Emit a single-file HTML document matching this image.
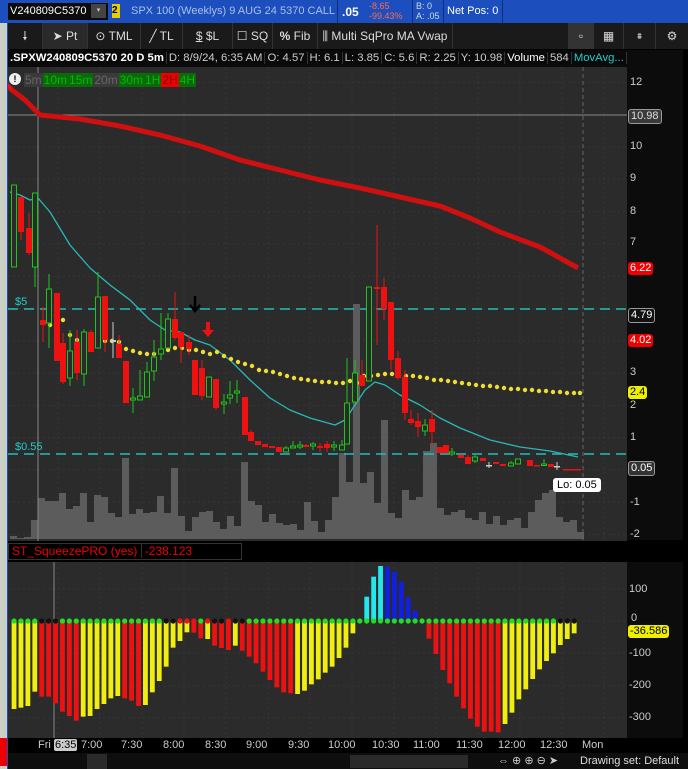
<!DOCTYPE html>
<html><head><meta charset="utf-8">
<style>
*{margin:0;padding:0;box-sizing:border-box}
body{width:688px;height:769px;overflow:hidden;background:#000;font-family:"Liberation Sans",sans-serif;position:relative}
.a{position:absolute}
.top{left:0;top:0;width:688px;height:23px;background:#1c4fbd}
.tb{left:8px;top:23px;width:680px;height:26px;background:#1a1a1a}
.btn{position:absolute;top:0;height:26px;color:#ddd;font-size:12px;line-height:26px;border-right:1px solid #333;text-align:center}
.info{left:8px;top:50px;width:620px;height:17px;background:#0a0a0a;font-size:11.3px;color:#ccc;line-height:17px;white-space:nowrap;overflow:hidden}
.info span{padding:0 2px;border-right:1px solid #333}
.lbl{position:absolute;font-size:11px;border-radius:3px;padding:0 2px;line-height:13px}
.ax{position:absolute;color:#ccc;font-size:11px}
.tf span{display:inline-block;padding:0 1px;margin-right:0}
</style></head><body>
<div class="a" style="left:0;top:0;width:8px;height:769px;background:#c9cfc2"></div>
<div class="a" style="left:7px;top:0;width:2px;height:769px;background:#1c4fbd"></div>
<div class="a top">
 <div class="a" style="left:8px;top:3px;width:100px;height:17px;background:#0b0b0b;color:#fff;font-size:11px;line-height:17px;padding-left:2px">V240809C5370</div>
 <div class="a" style="left:91px;top:4px;width:15px;height:14px;background:#444;color:#ccc;font-size:7px;text-align:center;line-height:14px">▾</div>
 <div class="a" style="left:112px;top:4px;width:8px;height:14px;background:#e8d000;color:#000;font-size:10px;font-weight:bold;line-height:14px">2</div>
 <div class="a" style="left:131px;top:5px;color:#a9bfe8;font-size:11px">SPX 100 (Weeklys) 9 AUG 24 5370 CALL</div>
 <div class="a" style="left:337px;top:0;width:1px;height:23px;background:#0d2f7a"></div>
 <div class="a" style="left:342px;top:5px;color:#fff;font-size:12px;font-weight:bold">.05</div>
 <div class="a" style="left:369px;top:1px;color:#ff6a4a;font-size:9px;line-height:10px">-8.65<br>-99.43%</div>
 <div class="a" style="left:412px;top:0;width:1px;height:23px;background:#0d2f7a"></div>
 <div class="a" style="left:416px;top:1px;color:#cdd;font-size:9px;line-height:10px">B: 0<br>A: .05</div>
 <div class="a" style="left:443px;top:0;width:1px;height:23px;background:#0d2f7a"></div>
 <div class="a" style="left:447px;top:5px;color:#fff;font-size:11px">Net Pos: 0</div>
 <div class="a" style="left:502px;top:0;width:1px;height:23px;background:#0d2f7a"></div>
</div>
<div class="a tb">
 <div class="btn" style="left:0;width:35px">🠗</div>
 <div class="btn" style="left:35px;width:45px;background:#2a2a2a">➤ Pt</div>
 <div class="btn" style="left:80px;width:53px">⊙ TML</div>
 <div class="btn" style="left:133px;width:42px">╱ TL</div>
 <div class="btn" style="left:175px;width:50px"><u>$</u> $L</div>
 <div class="btn" style="left:225px;width:40px">☐ SQ</div>
 <div class="btn" style="left:265px;width:45px"><b>%</b> Fib</div>
 <div class="btn" style="left:310px;width:135px">⫼ Multi SqPro MA Vwap</div>
 <div class="btn" style="left:560px;width:26px;background:#333;border:none">▫</div>
 <div class="btn" style="left:586px;width:30px">▦</div>
 <div class="btn" style="left:616px;width:32px;font-size:9px">⩩</div>
 <div class="btn" style="left:648px;width:32px;border:none">⚙</div>
</div>
<div class="a info"><span style="color:#fff;font-weight:bold">.SPXW240809C5370 20 D 5m</span><span>D: 8/9/24, 6:35 AM</span><span>O: 4.57</span><span>H: 6.1</span><span>L: 3.85</span><span>C: 5.6</span><span>R: 2.25</span><span>Y: 10.98</span><span style="color:#fff">Volume</span><span>584</span><span style="color:#2cc">MovAvg...</span></div>
<div class="a" style="left:627px;top:50px;width:56px;height:490px;background:#0c0c0c"></div>
<div class="a" style="left:683px;top:50px;width:5px;height:719px;background:#000"></div>
<svg class="a" style="left:8px;top:67px" width="619" height="474" id="main"></svg>
<div class="a" style="left:9px;top:73px;width:12px;height:12px;border-radius:6px;background:#eee;color:#000;font-size:9px;text-align:center;line-height:12px;font-weight:bold">!</div>
<div class="a tf" style="left:24px;top:73px;font-size:12px;line-height:14px;white-space:nowrap">
<span style="background:#3a3a3a;color:#666">5m</span><span style="background:#0a6a0a;color:#0b0">10m</span><span style="background:#0a6a0a;color:#0b0">15m</span><span style="background:#3a3a3a;color:#666">20m</span><span style="background:#0a6a0a;color:#0b0">30m</span><span style="background:#0a6a0a;color:#0b0">1H</span><span style="background:#e00;color:#700">2H</span><span style="background:#0a6a0a;color:#0b0">4H</span></div>
<div class="ax" style="left:630px;top:76px">12</div>
<div class="ax" style="left:630px;top:140px">10</div>
<div class="ax" style="left:630px;top:172px">9</div>
<div class="ax" style="left:630px;top:205px">8</div>
<div class="ax" style="left:630px;top:236px">7</div>
<div class="ax" style="left:630px;top:366px">3</div>
<div class="ax" style="left:630px;top:399px">2</div>
<div class="ax" style="left:630px;top:431px">1</div>
<div class="ax" style="left:630px;top:496px">-1</div>
<div class="ax" style="left:630px;top:528px">-2</div>
<div class="lbl" style="left:628px;top:109px;background:#3a3a3a;color:#ddd;border:1px solid #999">10.98</div>
<div class="lbl" style="left:628px;top:262px;background:#e00;color:#fff">6.22</div>
<div class="lbl" style="left:628px;top:308px;background:#111;color:#fff;border:1px solid #999">4.79</div>
<div class="lbl" style="left:628px;top:334px;background:#e00;color:#fff">4.02</div>
<div class="lbl" style="left:628px;top:386px;background:#ee0;color:#000">2.4</div>
<div class="lbl" style="left:628px;top:461px;background:#333;color:#fff;border:1px solid #999">0.05</div>
<div class="a" style="left:553px;top:478px;background:#fff;color:#000;font-size:11px;padding:1px 4px;border-radius:3px">Lo: 0.05</div>
<div class="a" style="left:15px;top:296px;color:#2cc;font-size:11px">$5</div>
<div class="a" style="left:15px;top:441px;color:#2cc;font-size:11px">$0.55</div>
<div class="a" style="left:8px;top:541px;width:619px;height:21px;background:#000"></div>
<div class="a" style="left:8px;top:543px;width:234px;height:17px;border:1px solid #333;color:#e00;font-size:12px;line-height:15px;padding-left:3px">ST_SqueezePRO (yes) <span style="border-left:1px solid #333;padding-left:3px">-238.123</span></div>
<svg class="a" style="left:8px;top:562px" width="619" height="176" id="hist"></svg>
<div class="a" style="left:627px;top:562px;width:56px;height:176px;background:#0c0c0c"></div>
<div class="ax" style="left:629px;top:583px">100</div>
<div class="ax" style="left:631px;top:612px">0</div>
<div class="ax" style="left:629px;top:647px">-100</div>
<div class="ax" style="left:629px;top:679px">-200</div>
<div class="ax" style="left:629px;top:711px">-300</div>
<div class="lbl" style="left:628px;top:625px;background:#ee0;color:#000">-36.586</div>
<div class="a" style="left:8px;top:738px;width:675px;height:15px;background:#000"></div>
<div class="a" style="left:8px;top:739px;font-size:11px;color:#ccc;width:680px;height:14px">
<span class="a" style="left:30px">Fri</span><span class="a" style="left:46px;background:#ccc;color:#000;border-radius:2px;padding:0 1px">6:35</span><span class="a" style="left:73px">7:00</span><span class="a" style="left:113px">7:30</span><span class="a" style="left:155px">8:00</span><span class="a" style="left:197px">8:30</span><span class="a" style="left:238px">9:00</span><span class="a" style="left:280px">9:30</span><span class="a" style="left:320px">10:00</span><span class="a" style="left:364px">10:30</span><span class="a" style="left:405px">11:00</span><span class="a" style="left:448px">11:30</span><span class="a" style="left:490px">12:00</span><span class="a" style="left:532px">12:30</span><span class="a" style="left:574px">Mon</span></div>
<div class="a" style="left:8px;top:753px;width:680px;height:16px;background:#0e0e0e"></div>
<div class="a" style="left:87px;top:754px;width:20px;height:15px;background:#2a2a2a"></div>
<div class="a" style="left:350px;top:755px;width:118px;height:13px;background:#2a2a2a"></div>
<div class="a" style="left:498px;top:754px;color:#ccc;font-size:11px">⇔ ⊕ ⊕ ⊖ ➤</div>
<div class="a" style="left:580px;top:755px;color:#ddd;font-size:11px">Drawing set: Default</div>
<div class="a" style="left:0;top:738px;width:7px;height:28px;background:#e00"></div>
<script>
var NS="http://www.w3.org/2000/svg";
function el(p,t,a){var e=document.createElementNS(NS,t);for(var k in a)e.setAttribute(k,a[k]);p.appendChild(e);return e;}
var m=document.getElementById('main'),OX=8,OY=67;
el(m,'rect',{x:0,y:0,width:619,height:474,fill:'#2b2b2b'});
for(var gx=50;gx<619;gx+=42)el(m,'line',{x1:gx,y1:0,x2:gx,y2:474,stroke:'#363636','stroke-dasharray':'2,3'});
for(var p=-2;p<=12;p++){var yy=470-32.3*p-OY;el(m,'line',{x1:0,y1:yy,x2:619,y2:yy,stroke:'#363636','stroke-dasharray':'2,3'});}
var vols=[[10,536],[17,538],[24,537],[31,520],[38,498],[45,501],[52,501],[59,493],[66,509],[73,506],[80,493],[87,522],[94,495],[101,497],[108,513],[115,517],[122,458],[129,514],[136,509],[143,513],[150,512],[157,496],[164,513],[171,468],[178,516],[185,531],[192,517],[199,512],[206,511],[213,522],[220,529],[227,516],[234,526],[241,462],[248,501],[255,505],[262,522],[269,514],[276,523],[283,525],[290,524],[297,530],[304,502],[311,521],[318,532],[325,520],[332,497],[339,453],[346,482],[353,304],[360,483],[367,472],[374,503],[381,420],[388,513],[395,518],[402,490],[409,500],[416,497],[423,451],[430,443],[437,508],[444,515],[451,512],[458,510],[465,518],[472,520],[479,512],[486,524],[493,516],[500,525],[507,520],[514,518],[521,528],[528,512],[535,500],[542,493],[549,490],[556,517],[563,522],[570,520],[577,532]];
vols.forEach(function(v){el(m,'rect',{x:v[0]-OX,y:v[1]-OY,width:7,height:539-v[1],fill:'#5c5c5c'});});
el(m,'line',{x1:0,y1:115-OY,x2:619,y2:115-OY,stroke:'#888'});
el(m,'line',{x1:30,y1:0,x2:30,y2:474,stroke:'#888'});
el(m,'line',{x1:575,y1:0,x2:575,y2:474,stroke:'#666','stroke-dasharray':'4,3'});
el(m,'line',{x1:0,y1:309-OY,x2:619,y2:309-OY,stroke:'#2bb','stroke-width':1.5,'stroke-dasharray':'10,6'});
el(m,'line',{x1:0,y1:454-OY,x2:619,y2:454-OY,stroke:'#2bb','stroke-width':1.5,'stroke-dasharray':'10,6'});
function pl(pts,st,w){el(m,'polyline',{points:pts.map(function(q){return (q[0]-OX)+','+(q[1]-OY)}).join(' '),fill:'none',stroke:st,'stroke-width':w,'stroke-linejoin':'round'});}
pl([[8,87],[25,100],[40,115],[80,119],[120,126],[160,135],[200,146],[240,160],[280,170],[320,180],[360,188],[400,197],[440,206],[470,218],[500,232],[540,247],[578,268]],'#d01010',5);
pl([[10,192],[20,195],[30,200],[38,198],[50,212],[70,245],[90,268],[110,285],[130,300],[150,320],[165,330],[180,332],[195,340],[210,345],[230,360],[250,380],[270,398],[290,410],[310,418],[335,425],[345,420],[355,405],[365,390],[375,382],[385,385],[400,395],[420,405],[440,418],[460,428],[490,440],[520,447],[550,451],[578,457]],'#29b7b7',1.3);
var yd=[[50,325],[56,315],[63,320],[70,335],[77,340],[84,345],[91,345],[98,344],[105,341],[112,341],[119,342],[126,349],[133,351],[140,353],[147,354],[154,354],[161,352],[168,350],[175,348],[182,348],[189,350],[196,350],[203,352],[210,354],[217,352],[224,356],[231,359],[238,362],[245,364],[252,366],[259,370],[266,371],[273,372],[280,374],[287,376],[294,378],[301,379],[308,380],[315,381],[322,382],[329,382],[336,383],[343,383],[350,381],[357,383],[364,376],[371,376],[378,375],[385,374],[392,374],[399,375],[406,376],[413,376],[420,377],[427,378],[434,380],[441,380],[448,381],[455,382],[462,383],[469,384],[476,385],[483,386],[490,386],[497,387],[504,388],[511,389],[518,389],[525,390],[532,390],[539,391],[546,391],[553,392],[560,392],[567,393],[574,393],[580,393]];
yd.forEach(function(d){el(m,'circle',{cx:d[0]-OX,cy:d[1]-OY,r:2.2,fill:'#eedd33'});});
var G='#1ec51e',R='#ee1111',W='#ccc';
var c=[[14,185,267,185,267,G],[21,197,232,197,240,R],[29,228,253,213,255,R],[35,193,267,193,287,G],[43,320,325,307,342,R],[49,289,323,274,348,G],[57,293,361,293,361,R],[63,343,382,333,384,R],[70,351,378,330,386,G],[77,342,373,330,380,R],[84,332,374,329,386,G],[91,332,352,330,352,R],[98,297,348,272,348,G],[105,296,340,296,352,R],[113,340,342,322,358,W],[119,344,358,335,358,R],[126,361,403,361,403,R],[133,398,400,388,413,G],[140,396,400,370,400,G],[147,372,397,362,397,G],[154,357,371,340,381,G],[161,349,354,313,360,G],[168,319,348,313,348,G],[175,319,338,292,340,R],[181,332,347,332,363,R],[189,342,349,335,355,R],[195,360,395,360,395,R],[202,368,396,360,400,R],[209,377,397,377,397,G],[216,379,408,379,410,R],[224,402,404,394,414,G],[230,395,398,381,404,G],[237,391,393,380,403,G],[245,397,435,397,435,R],[251,432,441,430,441,R],[258,441,445,441,445,R],[265,444,447,444,447,R],[272,446,448,446,448,R],[279,447,452,447,452,R],[286,448,452,446,452,G],[293,446,448,441,448,G],[300,445,447,441,449,G],[306,445,447,444,447,R],[313,444,446,442,450,G],[320,446,448,443,452,R],[327,444,448,441,452,R],[334,445,447,441,451,G],[342,445,450,440,450,G],[347,403,444,358,444,G],[355,373,402,360,402,G],[362,375,386,360,386,R],[369,287,381,287,381,G],[377,287,289,225,345,R],[384,287,309,278,320,R],[391,302,360,302,370,R],[398,358,378,351,380,R],[405,377,413,370,420,R],[411,419,423,410,425,R],[418,421,427,413,437,R],[425,425,431,419,436,G],[432,419,432,410,445,R],[440,447,453,447,453,R],[446,445,453,445,453,R],[452,452,454,448,456,G],[461,455,458,455,458,R],[468,457,464,455,464,R],[475,457,461,455,463,G],[483,458,461,458,461,R],[489,465,466,462,468,W],[496,462,464,462,464,R],[503,464,466,464,466,R],[511,463,466,461,466,G],[518,459,464,459,464,G],[530,460,466,460,466,R],[537,465,466,465,466,R],[544,464,465,459,466,G],[551,464,467,464,467,R],[557,466,467,462,470,W],[566,469,470,469,470,R],[572,469,470,469,470,R],[578,469,470,469,470,R]];
c.forEach(function(k){var x=k[0]-OX;el(m,'line',{x1:x,y1:k[3]-OY,x2:x,y2:k[4]-OY,stroke:k[5]});
 var h=Math.max(k[2]-k[1],1.5);
 if(k[5]==G)el(m,'rect',{x:x-2.5,y:k[1]-OY,width:5,height:h,fill:'#2b2b2b',stroke:G,'stroke-width':1});
 else el(m,'rect',{x:x-3,y:k[1]-OY,width:6,height:h,fill:k[5]});});
el(m,'path',{d:'M187 229 v14 M182 238 l5 6 l5 -6',stroke:'#000','stroke-width':2.5,fill:'none'});
el(m,'path',{d:'M198 255 h4 v8 h4 l-6 7 l-6 -7 h4z',fill:'#e11'});
el(m,'line',{x1:-8,y1:10,x2:4,y2:22,stroke:'#e11','stroke-width':3});
var h=document.getElementById('hist'),HY=562;
el(h,'rect',{x:0,y:0,width:619,height:176,fill:'#2b2b2b'});
for(var gx=50;gx<619;gx+=42)el(h,'line',{x1:gx,y1:0,x2:gx,y2:176,stroke:'#363636','stroke-dasharray':'2,3'});
[589,621,653,686,718].forEach(function(y){el(h,'line',{x1:0,y1:y-HY,x2:619,y2:y-HY,stroke:'#363636','stroke-dasharray':'2,3'});});
el(h,'line',{x1:46,y1:0,x2:46,y2:176,stroke:'#888'});
var Y='#f0ee10',C='#22e8ee',B='#1020e0';
var hb=[[537,Y],[533,Y],[528,Y],[485,Y],[500,R],[500,R],[520,R],[545,R],[558,R],[572,R],[560,Y],[558,Y],[537,Y],[522,Y],[505,Y],[498,Y],[505,R],[512,R],[528,R],[525,Y],[487,Y],[453,Y],[410,Y],[353,Y],[333,Y],[307,Y],[308,R],[325,R],[327,Y],[347,R],[354,R],[360,R],[347,Y],[362,R],[380,R],[400,R],[425,R],[450,R],[472,R],[487,R],[490,R],[492,Y],[482,Y],[463,Y],[448,Y],[428,Y],[410,Y],[384,Y],[353,Y],[310,Y],[272,Y],[200,C],[140,C],[108,C],[110,B],[125,B],[155,B],[202,B],[242,B],[272,Y],[326,R],[372,R],[420,R],[460,R],[500,R],[535,R],[566,R],[590,R],[605,R],[605,R],[607,R],[582,Y],[548,Y],[508,Y],[478,Y],[447,Y],[418,Y],[393,Y],[370,Y],[345,Y],[327,Y],[310,Y]];
var dots=['g','g','g','g','k','k','k','g','g','g','g','g','g','g','g','g','g','g','g','g','g','g','k','k','r','r','r','g','r','k','k','r','k','k','g','g','g','g','g','g','g','g','g','g','g','g','g','g','g','g','g','g','g','g','g','g','g','g','g','g','g','g','g','g','g','g','g','g','g','g','g','g','g','g','g','g','g','g','g','k','k','k'];
var z=621-HY;
hb.forEach(function(b,i){var x=32/2.279+i*15.76/2.279-8;var y=530+b[0]/3-HY;
 if(y<z)el(h,'rect',{x:x-2.4,y:y,width:4.8,height:z-y,fill:b[1]});
 else if(y>z+1)el(h,'rect',{x:x-2.4,y:z,width:4.8,height:y-z,fill:b[1]});
 var d=dots[i]||'g';el(h,'circle',{cx:x,cy:z,r:2.6,fill:d=='g'?'#22dd22':d=='r'?'#ee1111':'#111'});});
</script>
</body></html>
